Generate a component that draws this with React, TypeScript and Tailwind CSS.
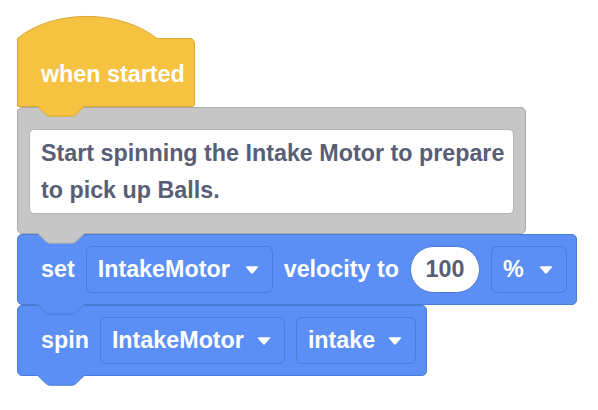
import React from "react";

const FONT = { fontFamily: '"Liberation Sans", Arial, sans-serif' };

function Arrow() {
  return (
    <svg width="14" height="8" viewBox="0 0 14 8" className="shrink-0">
      <path
        d="M1.6 0.3 H12.4 Q14 0.3 12.9 1.6 L8.1 7.1 Q7 8.2 5.9 7.1 L1.1 1.6 Q0 0.3 1.6 0.3 Z"
        fill="white"
      />
    </svg>
  );
}

function Tab({ fill, stroke }: { fill: string; stroke: string }) {
  return (
    <svg
      width="48"
      height="12"
      viewBox="0 0 48 12"
      className="absolute left-[19px] top-full pointer-events-none"
    >
      <path d="M0 0 L9 8.6 Q10.6 10.2 13 10.2 L35 10.2 Q37.4 10.2 39 8.6 L48 0 Z" fill={fill} />
      <path
        d="M0.5 0 L9 8.6 Q10.6 10.2 13 10.2 L35 10.2 Q37.4 10.2 39 8.6 L47.5 0"
        fill="none"
        stroke={stroke}
        strokeWidth="1"
      />
    </svg>
  );
}

function Dropdown({ label, width }: { label: string; width: string }) {
  return (
    <div
      className={`flex h-[47px] items-center justify-between rounded-[6px] border border-[#4a7bd6] pl-[11px] pr-[13px] ${width}`}
    >
      <span className="text-[23.3px] font-bold leading-none text-white">{label}</span>
      <Arrow />
    </div>
  );
}

export default function App() {
  return (
    <div className="min-h-[410px] w-[598px] bg-white pl-[17px] pt-[38px]" style={FONT}>
      <div className="flex flex-col">
        {/* Hat block */}
        <div className="relative z-40 h-[69px] w-[178px] rounded-tr-[5px] rounded-br-[3px] border border-[#d9aa33] bg-[#f5c242] pl-[23px] pt-[21px]">
          <svg
            width="142"
            height="24"
            viewBox="0 0 142 24"
            className="absolute -left-px top-[-24px]"
          >
            <path d="M0 24 L0 23.5 C36 -6 103 -6 140 23.5 L141 24 Z" fill="#f5c242" />
            <path d="M0.5 24 L0.5 23.5 C36 -6 103 -6 140 23.5" fill="none" stroke="#d9aa33" strokeWidth="1" />
          </svg>
          <div className="whitespace-nowrap text-[23.3px] font-bold leading-[28px] text-white">
            when started
          </div>
          <Tab fill="#f5c242" stroke="#d9aa33" />
        </div>

        {/* Comment block */}
        <div className="relative z-30 h-[127px] w-[509px] rounded-[5px] border border-[#ababab] bg-[#c6c6c6] pl-[11px] pt-[21px]">
          <div className="h-[85px] w-[485px] rounded-[5px] border border-[#b3b3b3] bg-white pl-[11px] pt-[5px]">
            <div className="whitespace-nowrap text-[23.3px] font-bold leading-[37px] text-[#575e75]">
              Start spinning the Intake Motor to prepare
              <br />
              to pick up Balls.
            </div>
          </div>
          <Tab fill="#c6c6c6" stroke="#ababab" />
        </div>

        {/* Set velocity block */}
        <div className="relative z-20 flex h-[71px] w-[560px] items-center gap-[11px] rounded-[5px] border border-[#4a7bd6] bg-[#5b8ff5] pl-[23px]">
          <span className="text-[23.3px] font-bold leading-none text-white">set</span>
          <Dropdown label="IntakeMotor" width="w-[187px]" />
          <span className="whitespace-nowrap text-[23.3px] font-bold leading-none text-white">velocity to</span>
          <div className="flex h-[47px] w-[70px] items-center justify-center rounded-full border border-[#4a7bd6] bg-white">
            <span className="text-[23.3px] font-bold leading-none text-[#575e75]">100</span>
          </div>
          <Dropdown label="%" width="w-[76px]" />
          <Tab fill="#5b8ff5" stroke="#4a7bd6" />
        </div>

        {/* Spin block */}
        <div className="relative z-10 flex h-[71px] w-[410px] items-center gap-[11px] rounded-[5px] border border-[#4a7bd6] bg-[#5b8ff5] pl-[23px]">
          <span className="text-[23.3px] font-bold leading-none text-white">spin</span>
          <Dropdown label="IntakeMotor" width="w-[185px]" />
          <Dropdown label="intake" width="w-[120px]" />
          <Tab fill="#5b8ff5" stroke="#4a7bd6" />
        </div>
      </div>
    </div>
  );
}
